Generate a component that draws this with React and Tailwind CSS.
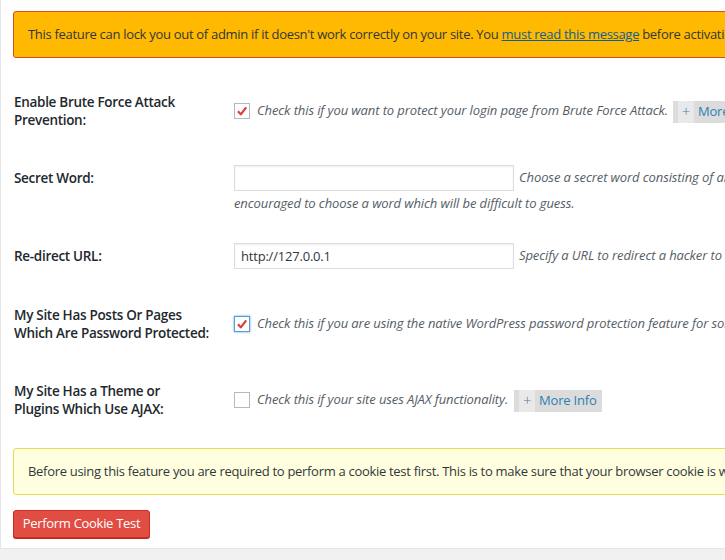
import React from "react";

const font = { fontFamily: '"Open Sans", "Noto Sans", sans-serif' };

function Check({ checked, focused }) {
    return (
        <span
            className={
                "inline-flex items-center justify-center w-4 h-4 shrink-0 bg-white border " +
                (focused ? "border-[#5b9dd9] shadow-[0_0_2px_rgba(30,140,190,0.8)]" : "border-[#b4b9be]")
            }
        >
            {checked && (
                <svg width="12" height="12" viewBox="0 0 12 12">
                    <path d="M2 6.2 L4.8 9.4 L10.2 2.4" fill="none" stroke="#dd3d36" strokeWidth="2.2" strokeLinejoin="round" />
                </svg>
            )}
        </span>
    );
}

function MoreInfo() {
    return (
        <span className="inline-flex items-center h-[22px] bg-[#dcdcdc] pl-[5px] pr-[5px] text-[13px] tracking-[-0.2px] text-[#2e80b3] whitespace-nowrap">
            <span className="flex items-center justify-center w-[16px] h-[22px] bg-[#e9e9e9] text-[#4a7fa8] text-[15px] font-light leading-none">+</span>
            <span className="ml-[4px]">More Info</span>
        </span>
    );
}

function Label({ children, className = "" }) {
    return (
        <div className={"w-[233px] shrink-0 pl-[13px] text-[13.5px] tracking-[-0.3px] leading-[18px] font-semibold text-[#23282d] " + className}>
            {children}
        </div>
    );
}

function Desc({ children, className = "" }) {
    return <span className={"italic text-[13px] tracking-[-0.1px] text-[#555d66] whitespace-nowrap " + className}>{children}</span>;
}

export default function App() {
    return (
        <div className="w-[725px] h-[560px] overflow-hidden bg-[#f1f1f1]" style={font}>
            <div className="w-[1100px] h-[549px] bg-white border-l border-b border-[#e5e5e5] pt-[11px]">
                {/* warning notice */}
                <div className="ml-[12px] w-[1000px] h-[47px] flex items-center pl-[14px] bg-[#ffb900] border border-[#d54e21] rounded-[3px] text-[13px] tracking-[-0.3px] text-[#32373c] whitespace-nowrap">
                    This feature can lock you out of admin if it doesn't work correctly on your site. You&nbsp;
                    <a href="#" className="underline text-[#0e5e96]">must read this message</a>
                    &nbsp;before activating this feature.
                </div>

                {/* brute force */}
                <div className="mt-[35px] flex items-center">
                    <Label>Enable Brute Force Attack<br />Prevention:</Label>
                    <Check checked />
                    <Desc className="ml-[7px]">Check this if you want to protect your login page from Brute Force Attack.</Desc>
                    <span className="ml-[5px]"><MoreInfo /></span>
                </div>

                {/* secret word */}
                <div className="mt-[36px] flex items-start">
                    <Label className="pt-[4px]">Secret Word:</Label>
                    <div>
                        <div className="flex items-center h-[26px]">
                            <input type="text" className="w-[280px] h-[26px] border border-[#ddd] shadow-[inset_0_1px_2px_rgba(0,0,0,0.07)] outline-none" />
                            <Desc className="ml-[5px]">Choose a secret word consisting of alphanumeric characters which you can use to access your special URL. Your are highly</Desc>
                        </div>
                        <div className="mt-[2px] leading-[18px]">
                            <Desc>encouraged to choose a word which will be difficult to guess.</Desc>
                        </div>
                    </div>
                </div>

                {/* redirect */}
                <div className="mt-[31px] flex items-center">
                    <Label>Re-direct URL:</Label>
                    <input type="text" defaultValue="http://127.0.0.1" className="w-[280px] h-[26px] px-[6px] text-[13px] tracking-[-0.2px] text-[#32373c] border border-[#ddd] shadow-[inset_0_1px_2px_rgba(0,0,0,0.07)] outline-none" />
                    <Desc className="ml-[5px]">Specify a URL to redirect a hacker to when they try to access your WordPress login page.</Desc>
                </div>

                {/* password protected */}
                <div className="mt-[37px] flex items-center">
                    <Label>My Site Has Posts Or Pages<br />Which Are Password Protected:</Label>
                    <Check checked focused />
                    <Desc className="ml-[7px]">Check this if you are using the native WordPress password protection feature for some or all of your blog posts or pages.</Desc>
                </div>

                {/* ajax */}
                <div className="mt-[40px] flex items-center">
                    <Label>My Site Has a Theme or<br />Plugins Which Use AJAX:</Label>
                    <Check />
                    <Desc className="ml-[7px]">Check this if your site uses AJAX functionality.</Desc>
                    <span className="ml-[6px]"><MoreInfo /></span>
                </div>

                {/* cookie notice */}
                <div className="mt-[30px] ml-[12px] w-[1000px] h-[47px] flex items-center pl-[14px] bg-[#ffffe0] border border-[#e6db55] rounded-[3px] text-[13px] tracking-[-0.3px] text-[#32373c] whitespace-nowrap">
                    Before using this feature you are required to perform a cookie test first. This is to make sure that your browser cookie is working correctly and that you won't lock yourself out.
                </div>

                <button className="mt-[15px] ml-[12px] h-[28px] w-[137px] bg-[#e14d43] border border-[#d02c21] rounded-[3px] text-white text-[13px] tracking-[-0.3px] shadow-[0_1px_0_#ba281e]">
                    Perform Cookie Test
                </button>
            </div>
        </div>
    );
}
